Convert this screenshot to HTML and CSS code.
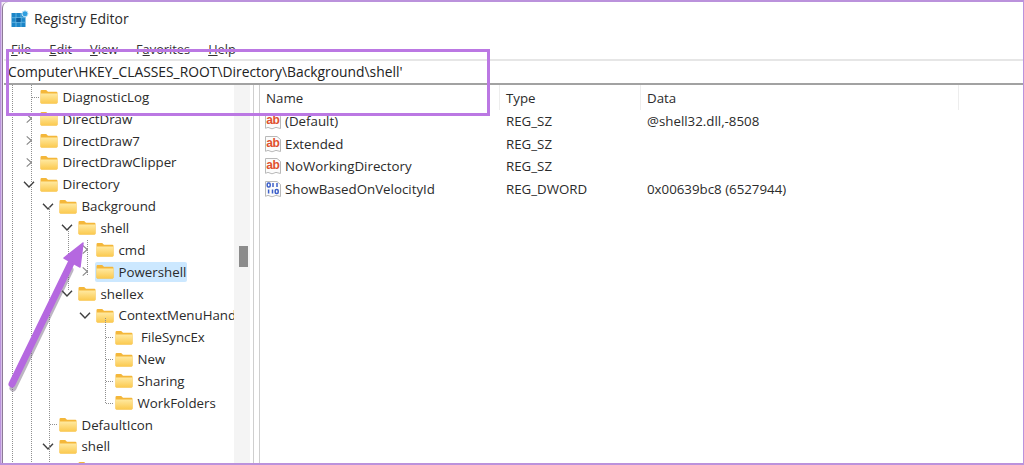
FILE: index.html
```html
<!DOCTYPE html>
<html lang="en">
<head>
    <meta charset="UTF-8">
    <title>Registry Editor</title>
    <link rel="stylesheet" href="styles.css">
</head>
<body>
    <svg class="defs" width="0" height="0">
        <defs>
            <linearGradient id="folderFill" x1="0" y1="0" x2="0" y2="1">
                <stop offset="0" stop-color="#ffe9a0"/>
                <stop offset="1" stop-color="#fbc94e"/>
            </linearGradient>
            <symbol id="folder" viewBox="0 0 18 15">
                <path d="M0.5 2.2Q0.5 1 1.7 1H6.2L8 2.8H16.4Q17.5 2.8 17.5 3.9V13.3Q17.5 14.5 16.3 14.5H1.7Q0.5 14.5 0.5 13.3Z" fill="#f4b73a"/>
                <path d="M0.5 4.6H17.5V13.3Q17.5 14.5 16.3 14.5H1.7Q0.5 14.5 0.5 13.3Z" fill="url(#folderFill)"/>
            </symbol>
            <symbol id="closed" viewBox="0 0 10 12">
                <path d="M2.5 1.5L7.5 6L2.5 10.5" fill="none" stroke="#8a8a8a" stroke-width="1.3"/>
            </symbol>
            <symbol id="open" viewBox="0 0 12 10">
                <path d="M1 2.2L6 7.5L11 2.2" fill="none" stroke="#404040" stroke-width="1.4"/>
            </symbol>
            <symbol id="sz" viewBox="0 0 18 18">
                <path d="M1.5 1.5H13L16.5 4.5V16.5L12 15.4L8 16.8L4 15.4L1.5 16.3Z" fill="#fbfbfb" stroke="#b9b9b9"/>
                <text x="8.8" y="11.5" text-anchor="middle" class="ab">ab</text>
            </symbol>
            <symbol id="dword" viewBox="0 0 18 18">
                <path d="M1.5 1.5H13L16.5 4.5V16.5L12 15.4L8 16.8L4 15.4L1.5 16.3Z" fill="#fbfbfb" stroke="#b9b9b9"/>
                <g fill="none" stroke="#3c5fc9" stroke-width="1.5">
                    <rect x="3.2" y="3" width="3" height="4" rx="1.2"/>
                    <path d="M9 3V7M13 3V7M4.6 9.5V13.5"/>
                    <path d="M8.5 9.5V13.5"/>
                    <rect x="11.2" y="9.5" width="3" height="4" rx="1.2"/>
                </g>
            </symbol>
        </defs>
    </svg>

    <div class="window">
        <div class="titlebar">
            <svg class="appicon" width="18" height="18" viewBox="0 0 18 18">
                <rect x="0.5" y="3" width="14" height="14" fill="#1c86c8"/>
                <path d="M5 3V17M10 3V17M0.5 7.7H14.5M0.5 12.3H14.5" stroke="#7cc3ea" stroke-width="0.7"/>
                <rect x="5.3" y="8" width="4.4" height="4" fill="#0f5f9e"/>
                <circle cx="14" cy="3.8" r="3" fill="#2f9fe0" stroke="#bfe3f7"/>
            </svg>
            <span class="title">Registry Editor</span>
        </div>

        <div class="menubar">
            <span><u>F</u>ile</span>
            <span><u>E</u>dit</span>
            <span><u>V</u>iew</span>
            <span>F<u>a</u>vorites</span>
            <span><u>H</u>elp</span>
        </div>

        <div class="address">Computer\HKEY_CLASSES_ROOT\Directory\Background\shell'</div>

        <div class="panes">
            <div class="tree">
                <div class="row l0"><span class="twist"></span><svg class="folder"><use href="#folder"/></svg><span class="name">DiagnosticLog</span></div>
                <div class="row l0"><span class="twist"><svg class="chev"><use href="#closed"/></svg></span><svg class="folder"><use href="#folder"/></svg><span class="name">DirectDraw</span></div>
                <div class="row l0"><span class="twist"><svg class="chev"><use href="#closed"/></svg></span><svg class="folder"><use href="#folder"/></svg><span class="name">DirectDraw7</span></div>
                <div class="row l0"><span class="twist"><svg class="chev"><use href="#closed"/></svg></span><svg class="folder"><use href="#folder"/></svg><span class="name">DirectDrawClipper</span></div>
                <div class="row l0"><span class="twist"><svg class="chev"><use href="#open"/></svg></span><svg class="folder"><use href="#folder"/></svg><span class="name">Directory</span></div>
                <div class="row l1"><span class="twist"><svg class="chev"><use href="#open"/></svg></span><svg class="folder"><use href="#folder"/></svg><span class="name">Background</span></div>
                <div class="row l2"><span class="twist"><svg class="chev"><use href="#open"/></svg></span><svg class="folder"><use href="#folder"/></svg><span class="name">shell</span></div>
                <div class="row l3"><span class="twist"><svg class="chev"><use href="#closed"/></svg></span><svg class="folder"><use href="#folder"/></svg><span class="name">cmd</span></div>
                <div class="row l3"><span class="twist"><svg class="chev"><use href="#closed"/></svg></span><span class="selected"><svg class="folder"><use href="#folder"/></svg><span class="name">Powershell</span></span></div>
                <div class="row l2"><span class="twist"><svg class="chev"><use href="#open"/></svg></span><svg class="folder"><use href="#folder"/></svg><span class="name">shellex</span></div>
                <div class="row l3"><span class="twist"><svg class="chev"><use href="#open"/></svg></span><svg class="folder"><use href="#folder"/></svg><span class="name">ContextMenuHandlers</span></div>
                <div class="row l4"><span class="twist"></span><svg class="folder"><use href="#folder"/></svg><span class="name">&nbsp;FileSyncEx</span></div>
                <div class="row l4"><span class="twist"></span><svg class="folder"><use href="#folder"/></svg><span class="name">New</span></div>
                <div class="row l4"><span class="twist"></span><svg class="folder"><use href="#folder"/></svg><span class="name">Sharing</span></div>
                <div class="row l4"><span class="twist"></span><svg class="folder"><use href="#folder"/></svg><span class="name">WorkFolders</span></div>
                <div class="row l1"><span class="twist"></span><svg class="folder"><use href="#folder"/></svg><span class="name">DefaultIcon</span></div>
                <div class="row l1"><span class="twist"><svg class="chev"><use href="#open"/></svg></span><svg class="folder"><use href="#folder"/></svg><span class="name">shell</span></div>
                <div class="row l2"><span class="twist"></span><svg class="folder"><use href="#folder"/></svg><span class="name">cmd</span></div>

                <!-- dotted guides of the tree -->
                <svg class="guides" width="231" height="382">
                    <g stroke="#8f8f8f" stroke-dasharray="1 1" fill="none">
                        <path d="M8.5 0V380M27.5 0V380M45.5 122V380M64.5 144V205M83.5 155V190M101.5 233V318"/>
                        <path d="M28 12.5H35M46 339.5H54M102 252.5H110M102 274.5H110M102 296.5H110M102 318.5H110"/>
                    </g>
                </svg>

                <div class="scrollbar"><div class="thumb"></div></div>
            </div>

            <div class="list">
                <div class="list-head">
                    <span class="col-name">Name</span>
                    <span class="col-type">Type</span>
                    <span class="col-data">Data</span>
                    <span class="col-rest"></span>
                </div>
                <div class="item">
                    <span class="col-name"><svg class="vicon"><use href="#sz"/></svg>(Default)</span>
                    <span class="col-type">REG_SZ</span>
                    <span class="col-data">@shell32.dll,-8508</span>
                </div>
                <div class="item">
                    <span class="col-name"><svg class="vicon"><use href="#sz"/></svg>Extended</span>
                    <span class="col-type">REG_SZ</span>
                    <span class="col-data"></span>
                </div>
                <div class="item">
                    <span class="col-name"><svg class="vicon"><use href="#sz"/></svg>NoWorkingDirectory</span>
                    <span class="col-type">REG_SZ</span>
                    <span class="col-data"></span>
                </div>
                <div class="item">
                    <span class="col-name"><svg class="vicon"><use href="#dword"/></svg>ShowBasedOnVelocityId</span>
                    <span class="col-type">REG_DWORD</span>
                    <span class="col-data">0x00639bc8 (6527944)</span>
                </div>
            </div>
        </div>
    </div>

    <!-- annotation drawn over the screenshot -->
    <div class="callout"></div>
    <svg class="arrow" width="100" height="160" viewBox="0 0 100 160">
        <path d="M12 144L69 26" stroke="#6b5a78" stroke-opacity="0.45" stroke-width="7" stroke-linecap="round" transform="translate(1 3)"/>
        <path d="M12 143L72 20" stroke="#b568e0" stroke-width="7" stroke-linecap="round"/>
        <path d="M83 2L64 17L80 26Z" fill="#b568e0" stroke="#b568e0" stroke-width="1.5" stroke-linejoin="round"/>
    </svg>
</body>
</html>
```

FILE: styles.css
```css
html, body {
    margin: 0;
    padding: 0;
    height: 465px;
    overflow: hidden;
}

body {
    position: relative;
    box-sizing: border-box;
    width: 1024px;
    padding: 2px 1px 2px 1px;
    background: #f3eef6;
    font-family: "Open Sans", "Noto Sans", sans-serif;
    font-size: 13.3px;
    color: #2b2b2b;
    box-shadow: inset 0 0 0 1.5px #bb92dc, inset 0 2px 0 #bb92dc, inset 0 -2px 0 #bb92dc;
}

.defs {
    position: absolute;
}

.ab {
    font-family: "Liberation Sans", sans-serif;
    font-size: 12px;
    font-weight: bold;
    letter-spacing: -0.4px;
    fill: #e0502f;
}

.window {
    height: 461px;
    margin-left: 1px;
    padding-left: 1px;
    background: #fff;
    border-top-left-radius: 6px;
    border-left: 1px solid #8d7a96;
    display: flex;
    flex-direction: column;
    overflow: hidden;
}

.titlebar {
    height: 33px;
    display: flex;
    align-items: center;
    padding-left: 7px;
    flex-shrink: 0;
}

.appicon {
    margin-right: 5px;
    margin-top: 1px;
}

.title {
    font-size: 14px;
}

.menubar {
    height: 24px;
    flex-shrink: 0;
    display: flex;
    align-items: center;
    gap: 18px;
    padding-left: 7px;
    padding-top: 4px;
    box-sizing: border-box;
    font-size: 12.8px;
    color: #333;
}

.address {
    height: 26px;
    flex-shrink: 0;
    box-sizing: border-box;
    padding-left: 4px;
    font-size: 13.85px;
    line-height: 22px;
    white-space: nowrap;
    border-top: 2px solid #e6e6e6;
    border-bottom: 2px solid #a2a2a2;
    color: #222;
}

.panes {
    flex: 1;
    display: flex;
    min-height: 0;
}

.tree {
    position: relative;
    width: 250px;
    flex-shrink: 0;
    box-sizing: border-box;
    padding-top: 1px;
    border-right: 1px solid #cfcfcf;
    overflow: hidden;
}

.row {
    height: 21.85px;
    display: flex;
    align-items: center;
    white-space: nowrap;
    width: 230px;
    box-sizing: border-box;
    overflow: hidden;
}

.l0 { padding-left: 17px; }
.l1 { padding-left: 36px; }
.l2 { padding-left: 55px; }
.l3 { padding-left: 73px; }
.l4 { padding-left: 92px; }

.twist {
    width: 19px;
    flex-shrink: 0;
    display: flex;
    justify-content: center;
    padding-right: 3px;
    box-sizing: border-box;
}

.chev {
    width: 12px;
    height: 11px;
}

.folder {
    width: 18px;
    height: 15px;
    flex-shrink: 0;
    margin-right: 4.5px;
}

.selected {
    display: flex;
    align-items: center;
    height: 20px;
    margin-left: -1px;
    padding: 0 1px;
    background: #cce8ff;
    border-radius: 2px;
}

.guides {
    position: absolute;
    left: 0;
    top: 0;
}

.scrollbar {
    position: absolute;
    top: 0;
    right: 3px;
    bottom: 0;
    width: 16px;
    background: #f4f4f4;
}

.thumb {
    position: absolute;
    top: 161px;
    left: 5px;
    width: 9px;
    height: 21px;
    background: #8b8b8b;
}

.list {
    flex: 1;
    margin-left: 5px;
    border-left: 1px solid #cfcfcf;
}

.list-head {
    height: 25px;
    display: flex;
    align-items: center;
    color: #2b2b2b;
}

.list-head span {
    height: 100%;
    line-height: 26px;
    border-right: 1px solid #ededed;
}

.list-head .col-rest {
    width: 60px;
    border-right: 0;
}

.item {
    height: 22.6px;
    display: flex;
    align-items: center;
}

.col-name {
    width: 240px;
    box-sizing: border-box;
    padding-left: 6px;
    display: flex;
    align-items: center;
    white-space: nowrap;
}

.col-type {
    width: 141px;
    box-sizing: border-box;
    padding-left: 6px;
}

.col-data {
    width: 318px;
    box-sizing: border-box;
    padding-left: 6px;
    white-space: nowrap;
}

.vicon {
    width: 18px;
    height: 18px;
    margin-left: -2px;
    margin-right: 3px;
}

/* annotation */
.callout {
    position: absolute;
    left: 6px;
    top: 49px;
    width: 478px;
    height: 61px;
    border: 3px solid #bb78e3;
}

.arrow {
    position: absolute;
    left: 0;
    top: 241px;
}
```
